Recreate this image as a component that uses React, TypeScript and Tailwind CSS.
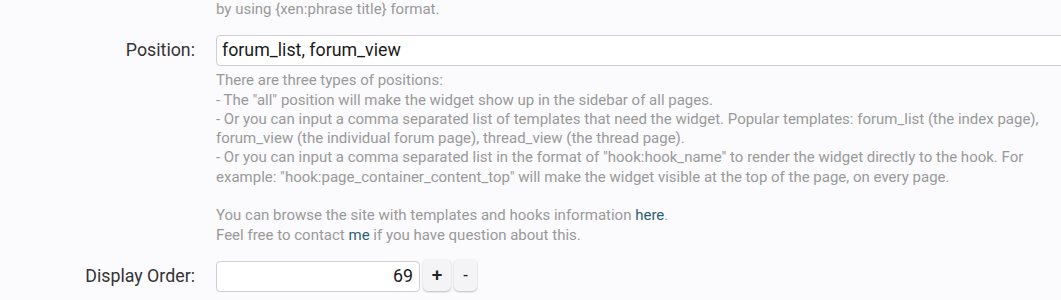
export default function App() {
  return (
    <div className="h-[300px] w-[1061px] overflow-hidden bg-[#fbfbfd] font-['Roboto',sans-serif] text-[#333]">
      <div className="grid grid-cols-[195px_1fr] gap-x-[21px]">
        <div />
        <p className="text-[15px] leading-[19.3px] text-[#999]">by using {'{xen:phrase title}'} format.</p>

        <label className="mt-[16px] flex h-[31px] items-center justify-end text-[17.8px]">Position:</label>
        <div className="mt-[16px]">
          <div className="flex h-[31px] w-[900px] items-center rounded-[4px] border border-[#cfcfd3] bg-white px-[5px] text-[17.8px] text-[#1a1a1a]">
            forum_list, forum_view
          </div>
          <div className="mt-[5px] whitespace-nowrap text-[15px] leading-[19.3px] text-[#999]">
            <p>There are three types of positions:</p>
            <p>- The "all" position will make the widget show up in the sidebar of all pages.</p>
            <p>
              - Or you can input a comma separated list of templates that need the widget. Popular templates: forum_list (the index page),
              <br />
              forum_view (the individual forum page), thread_view (the thread page).
            </p>
            <p>
              - Or you can input a comma separated list in the format of "hook:hook_name" to render the widget directly to the hook. For
              <br />
              example: "hook:page_container_content_top" will make the widget visible at the top of the page, on every page.
            </p>
            <p className="mt-[19.3px]">
              You can browse the site with templates and hooks information <a className="text-[#2f5f73]">here</a>.
            </p>
            <p>
              Feel free to contact <a className="text-[#2f5f73]">me</a> if you have question about this.
            </p>
          </div>
        </div>

        <label className="mt-[16px] flex h-[31px] items-center justify-end text-[17.8px]">Display Order:</label>
        <div className="mt-[16px] flex items-center gap-[3px]">
          <div className="flex h-[31px] w-[204px] items-center justify-end rounded-[4px] border border-[#cfcfd3] bg-white px-[6px] text-[17.8px] text-[#1a1a1a]">
            69
          </div>
          <button className="-mt-[2px] flex h-[32px] w-[28px] items-center justify-center rounded-[5px] bg-[#f4f4f6] text-[19px] font-medium text-[#222] shadow-[0_1px_2px_rgba(0,0,0,0.25)]">
            +
          </button>
          <button className="-mt-[2px] flex h-[32px] w-[23px] items-center justify-center rounded-[5px] bg-[#f4f4f6] text-[15px] font-medium text-[#222] shadow-[0_1px_2px_rgba(0,0,0,0.25)]">
            -
          </button>
        </div>
      </div>
    </div>
  );
}
